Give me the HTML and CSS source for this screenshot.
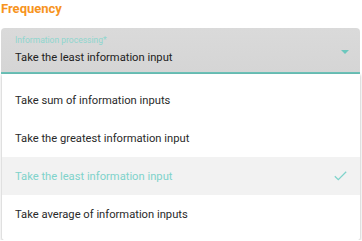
FILE: index.html
```html
<!DOCTYPE html>
<html lang="en">

<head>
    <meta charset="UTF-8">
    <meta name="viewport" content="width=device-width, initial-scale=1.0">
    <title>Frequency</title>
    <link rel="stylesheet" href="styles.css">
</head>

<body>
    <h3 class="title">Frequency</h3>
    <div class="field">
        <div class="field-text">
            <span class="field-label">Information processing*</span>
            <span class="field-value">Take the least information input</span>
        </div>
        <span class="arrow"></span>
    </div>
    <ul class="menu">
        <li>Take sum of information inputs</li>
        <li>Take the greatest information input</li>
        <li class="selected">
            Take the least information input
            <svg class="check" width="13" height="10" viewBox="0 0 13 10">
                <path d="M0.8 5.2 L4.3 8.6 L12.2 0.8" fill="none" stroke="#7fd3cb" stroke-width="1.3" />
            </svg>
        </li>
        <li>Take average of information inputs</li>
    </ul>
</body>

</html>
```

FILE: styles.css
```css
* {
    margin: 0;
    padding: 0;
    box-sizing: border-box;
}

body {
    font-family: Roboto, "Liberation Sans", sans-serif;
    background: #fff;
}

ul {
    list-style: none;
}

.title {
    font-size: 13px;
    line-height: 18px;
    font-weight: 700;
    color: #f7941d;
    padding-left: 1px;
}

/* select field */

.field {
    display: flex;
    height: 46px;
    margin: 10px 2px 0 1px;
    padding: 7px 11px 0 14px;
    background: linear-gradient(#dadada, #d5d5d5);
    border-radius: 4px 4px 0 0;
    border-bottom: 2px solid #6cc3b9;
}

.field-text {
    flex: 1;
    display: flex;
    flex-direction: column;
}

.field-label {
    font-size: 8.5px;
    line-height: 10px;
    color: #8fd6ce;
}

.field-value {
    margin-top: 6px;
    font-size: 11.2px;
    line-height: 14px;
    color: #222;
}

.arrow {
    width: 0;
    height: 0;
    margin-top: 15px;
    border-left: 4px solid transparent;
    border-right: 4px solid transparent;
    border-top: 4px solid #6cc7bd;
}

/* dropdown */

.menu {
    margin: 0 2px 0 2px;
    padding: 7px 0;
    background: #fff;
    box-shadow: 0 1px 3px rgba(0, 0, 0, 0.35);
    border-radius: 0 0 2px 2px;
}

.menu li {
    display: flex;
    align-items: center;
    justify-content: space-between;
    height: 38px;
    padding: 0 13px;
    font-size: 11.2px;
    color: #2a2a2a;
}

.menu .selected {
    background: #f2f2f2;
    color: #7fd3cb;
}
```
